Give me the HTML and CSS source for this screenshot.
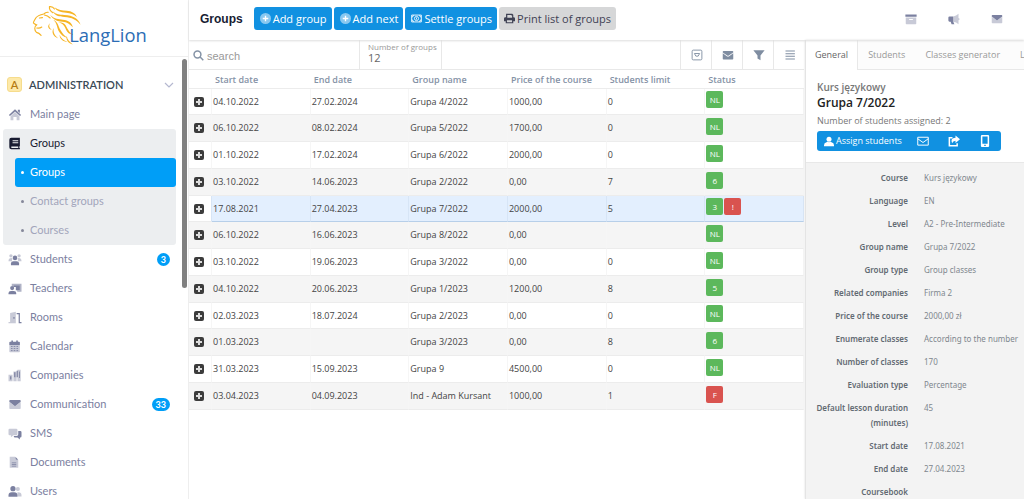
FILE: index.html
```html
<!DOCTYPE html>
<html lang="en">
<head>
<meta charset="utf-8">
<title>LangLion - Groups</title>
<link rel="stylesheet" href="styles.css">
</head>
<body>
<svg class="sprite" aria-hidden="true">
  <symbol id="i-mail" viewBox="0 0 16 16"><path class="soft" d="M1 5l7 5 7-5v7.500a1 1 0 0 1-1 1H2a1 1 0 0 1-1-1z"/><path d="M2 2.500h12a1 1 0 0 1 1 1v1.200L8 10 1 4.700V3.500a1 1 0 0 1 1-1z"/></symbol>
  <symbol id="i-mail-solid" viewBox="0 0 16 16"><path d="M1 5.800l5.500 4q1.500 1 3 0l5.500-4V13a1 1 0 0 1-1 1H2a1 1 0 0 1-1-1zM2 2.500h12a1 1 0 0 1 1 1v1L9 8.800q-1 .7-2 0L1 4.500v-1a1 1 0 0 1 1-1z"/></symbol>
  <symbol id="i-plus" viewBox="0 0 16 16"><circle class="soft-light" cx="8" cy="8" r="8"/><path d="M7 4h2v3h3v2H9v3H7V9H4V7h3z"/></symbol>
</svg>
<div class="app">
  <aside class="sidebar">
    <a class="logo" href="#" aria-label="LangLion">
      <svg viewBox="0 0 380 112">
        <g fill="none" stroke="#f6b526" stroke-width="3.500" stroke-linecap="round" stroke-linejoin="round">
          <path d="M144 33c-6-1-9 1-13 5-9 2-19 5-24 12-2 5-7 9-7 15 2 3 5 2 7 5M118 50l9-1"/>
          <path d="M110 70c-5 4-7 6-6 11 0 5 1 9 5 12 6 1 10 4 14 9M110 80c6 1 11 0 15-3"/>
          <path d="M133 41c7 1 12 4 17 9M148 16c-1 8 3 14 10 18M148 16c7-1 12 2 15 7"/>
        </g>
        <g fill="#f6b526">
          <path d="M163 18c12 8 22 10 36 10 16 1 27 8 31 19-9-9-19-12-32-13-17 0-29-5-35-16z"/>
          <path d="M157 30c12 10 21 10 35 11 27 1 43 11 49 29-12-14-26-22-48-23-17 0-28-4-36-17z"/>
          <path d="M150 41c14 12 25 13 38 14 17 2 27 9 30 23-9-10-17-16-31-17-16-1-28-6-37-20z"/>
          <path d="M174 63c23-1 23 13 30 22 4 8 9 12 15 14-10 1-17-4-21-13-5-11-8-19-24-23z"/>
          <path d="M160 56c15 6 14 20 21 30 6 11 13 18 22 24-13-3-22-11-28-22-5-11-4-22-15-32z"/>
          <path d="M150 66c-6 9-1 14 5 20-10-3-16-11-5-20zM161 80c-3 12 2 21 13 31-14-5-22-18-13-31zM178 100c5 11 13 17 24 22-14-2-23-9-24-22zM199 103c2 11 9 18 19 26-13-3-21-12-19-26z"/>
        </g>
        <text class="logo-text" x="207" y="122">LangLion</text>
      </svg>
    </a>
    <div class="side-scroll">
      <nav class="menu">
        <button class="section"><span class="letter">A</span><span>ADMINISTRATION</span>
          <svg class="chev" viewBox="0 0 10 6"><path d="M1 1l4 4 4-4"/></svg></button>
        <a class="item" href="#"><svg viewBox="0 0 16 16"><path class="soft" d="M8 5l5.500 5v5H10v-4H6v4H2.500v-5z"/><path d="M8 1.500l7.500 7-1.300 1.300L8 4.300 1.800 9.800.5 8.500zM11.500 2H14v4l-2.500-2z"/></svg>Main page</a>
        <div class="open">
          <a class="item dark" href="#"><svg viewBox="0 0 16 16"><path d="M3.500 1H14v10.500h-.6v2H14V15H3.500A2.500 2.500 0 0 1 1 12.500v-9A2.500 2.500 0 0 1 3.500 1z"/><path d="M5 4h7v1.200H5zM5 6.500h7v1.200H5zM3.500 11.800H12v1.700H3.500z" fill="#eceef0"/></svg>Groups</a>
          <a class="sub current" href="#">Groups</a>
          <a class="sub" href="#">Contact groups</a>
          <a class="sub" href="#">Courses</a>
        </div>
        <a class="item" href="#"><svg viewBox="0 0 16 16"><g class="soft"><circle cx="3" cy="3.500" r="2"/><circle cx="13" cy="3.500" r="2"/><path d="M0 10q0-4 3.500-4 1 0 1.500.5L4 10zM16 10q0-4-3.500-4-1 0-1.500.5l1 3.500z"/></g><circle cx="8" cy="6" r="2.800"/><path d="M3 15v-2q0-3 3-3h4q3 0 3 3v2z"/></svg>Students<span class="count">3</span></a>
        <a class="item" href="#"><svg viewBox="0 0 16 16"><path class="mid" d="M4 2h12v10h-5l-1-2h4V4H6v1H4z"/><path d="M6 4h8v6H9V6H6z"/><circle cx="4.500" cy="7.500" r="2.500"/><path d="M0 15v-1.500Q0 11 3 11h3.500q3 0 3 2.500V15z"/></svg>Teachers</a>
        <a class="item" href="#"><svg viewBox="0 0 16 16"><path class="soft" d="M2 2.500L9 1v14H0v-1.500h2z"/><path d="M10 2.500h4v11h2V15h-3.500V4H10zM6 7.500h1.500v2H6z"/></svg>Rooms</a>
        <a class="item" href="#"><svg viewBox="0 0 16 16"><path class="soft" d="M1 6h13v8a1 1 0 0 1-1 1H2a1 1 0 0 1-1-1z"/><path d="M3.500.5h2V2h4V.5h2V2H13a1 1 0 0 1 1 1v3H1V3a1 1 0 0 1 1-1h1.500z"/><path d="M3 8h9M3 10.500h9M3 13h9" stroke="#868aa8" stroke-width="1.200" stroke-dasharray="2 1.400"/></svg>Calendar</a>
        <a class="item" href="#"><svg viewBox="0 0 16 16"><path class="soft" d="M0 7h5v8H0zM6 3h4v12H6zM11 1h4v14h-4z"/><path d="M2 9h1.500v4H2zM7 4h1.500v6H7zM10 2h1.500v8H10zM13 3h1v8h-1z"/></svg>Companies</a>
        <a class="item" href="#"><svg><use href="#i-mail"/></svg>Communication<span class="count">33</span></a>
        <a class="item" href="#"><svg viewBox="0 0 16 16"><path class="soft" d="M1.500 2h8A1.500 1.500 0 0 1 11 3.500v5A1.500 1.500 0 0 1 9.500 10H6l-3 2.500V10H1.500A1.500 1.500 0 0 1 0 8.500v-5A1.500 1.500 0 0 1 1.500 2z"/><path d="M12 5h2.500A1.500 1.500 0 0 1 16 6.500v5a1.500 1.500 0 0 1-1.500 1.500H14v2.500L11 13H8a1.500 1.500 0 0 1-1.500-1.500V11H10q2 0 2-2z"/></svg>SMS</a>
        <a class="item" href="#"><svg viewBox="0 0 16 16"><path class="soft" d="M1.500 1H8v4h4v9.500H1.500z"/><path d="M8.500 1L12 4.500H8.500zM4 8h5.500v1H4zM4 10h5.500v1H4zM4 12h5.500v1H4z"/></svg>Documents</a>
        <a class="item" href="#"><svg viewBox="0 0 16 16"><g class="soft"><circle cx="11.500" cy="5" r="2.500"/><path d="M11 9h1q4 0 4 4v1h-5z"/></g><circle cx="5.500" cy="4.500" r="3.200"/><path d="M0 14.500V13q0-4 4-4h3q4 0 4 4v1.500z"/></svg>Users</a>
      </nav>
      <div class="thumb"></div>
    </div>
  </aside>

  <div class="content">
    <header class="topbar">
      <h1>Groups</h1>
      <button class="btn"><svg><use href="#i-plus"/></svg>Add group</button>
      <button class="btn"><svg><use href="#i-plus"/></svg>Add next</button>
      <button class="btn"><svg viewBox="0 0 16 16"><path d="M1 3h14v10H1zM1 6q2.500 0 2.500-3M15 6q-2.500 0-2.500-3M1 10q2.500 0 2.500 3M15 10q-2.500 0-2.500 3" fill="none" stroke="#fff" stroke-width="1.300"/><circle cx="8" cy="8" r="3" fill="none" stroke="#fff" stroke-width="1.200"/><path d="M7.400 6.500h1.200v3H7.400z"/></svg>Settle groups</button>
      <button class="btn grey"><svg viewBox="0 0 16 16"><path fill-rule="evenodd" d="M3 1h9l1.500 1.500V6H14a2 2 0 0 1 2 2v4h-2.500v3h-11v-3H0V8a2 2 0 0 1 2-2h1zM4.800 2.800V7h7V3.500h-1.200v-.7zM4.300 10.500v2.800h7.400v-2.800z"/></svg>Print list of groups</button>
      <div class="tools">
        <button aria-label="Archive"><svg viewBox="0 0 16 16"><path class="soft" d="M1 6h14v8a1 1 0 0 1-1 1H2a1 1 0 0 1-1-1z"/><path d="M.5 2h15v3H.5z"/><path d="M5.500 8h5v1.300h-5z" fill="#fff"/></svg></button>
        <button aria-label="Announcements"><svg viewBox="0 0 16 16"><path class="soft" d="M7 4.500q4-.5 7-3.500v5.500q1.500.5 1.500 1.500T14 9.500V15q-3-3-7-3.500z"/><path d="M2 4.500h5v7l1.500 3.500H4.800L3.500 11.500H2a1.500 1.500 0 0 1-1.500-1.500V6A1.500 1.500 0 0 1 2 4.500z"/></svg></button>
        <button aria-label="Messages"><svg><use href="#i-mail"/></svg></button>
      </div>
    </header>

    <div class="work">
      <main class="list">
        <div class="filters">
          <label class="search"><svg viewBox="0 0 16 16"><circle cx="6.500" cy="6.500" r="5" /><path d="M10.300 10.300L15 15"/></svg><input type="text" placeholder="search" aria-label="search"></label>
          <div class="total"><span>Number of groups</span><b>12</b></div>
          <div class="actions">
            <button aria-label="Show"><svg viewBox="0 0 16 16"><rect x="1.500" y="1.500" width="13" height="13" rx="1.500" fill="none" stroke="#8795a8" stroke-width="1.300"/><path d="M4.500 6h7l-2 3.500h-3z" fill="none" stroke="#8795a8" stroke-width="1.300"/></svg></button>
            <button aria-label="Send mail"><svg><use href="#i-mail-solid"/></svg></button>
            <button aria-label="Filter"><svg viewBox="0 0 16 16"><path d="M.5 1.500h15L10 8.500V15l-4-2.500v-4z"/></svg></button>
            <button aria-label="Menu"><svg viewBox="0 0 16 16"><path d="M2 2h12.500v1.400H2zM2 5.500h12.500v1.400H2zM2 9h12.500v1.400H2zM2 12.500h12.500v1.400H2z"/></svg></button>
          </div>
        </div>
        <table>
          <thead><tr><th class="exp"></th><th>Start date</th><th>End date</th><th>Group name</th><th>Price of the course</th><th>Students limit</th><th>Status</th></tr></thead>
          <tbody>
            <tr><td class="exp"><button aria-label="Expand"></button></td><td>04.10.2022</td><td>27.02.2024</td><td>Grupa 4/2022</td><td>1000,00</td><td>0</td><td class="st"><span class="tag">NL</span></td></tr>
            <tr><td class="exp"><button aria-label="Expand"></button></td><td>06.10.2022</td><td>08.02.2024</td><td>Grupa 5/2022</td><td>1700,00</td><td>0</td><td class="st"><span class="tag">NL</span></td></tr>
            <tr><td class="exp"><button aria-label="Expand"></button></td><td>01.10.2022</td><td>17.02.2024</td><td>Grupa 6/2022</td><td>2000,00</td><td>0</td><td class="st"><span class="tag">NL</span></td></tr>
            <tr><td class="exp"><button aria-label="Expand"></button></td><td>03.10.2022</td><td>14.06.2023</td><td>Grupa 2/2022</td><td>0,00</td><td>7</td><td class="st"><span class="tag">6</span></td></tr>
            <tr class="selected"><td class="exp"><button aria-label="Expand"></button></td><td>17.08.2021</td><td>27.04.2023</td><td>Grupa 7/2022</td><td>2000,00</td><td>5</td><td class="st"><span class="tag">3</span><span class="tag red">!</span></td></tr>
            <tr><td class="exp"><button aria-label="Expand"></button></td><td>06.10.2022</td><td>16.06.2023</td><td>Grupa 8/2022</td><td>0,00</td><td></td><td class="st"><span class="tag">NL</span></td></tr>
            <tr><td class="exp"><button aria-label="Expand"></button></td><td>03.10.2022</td><td>19.06.2023</td><td>Grupa 3/2022</td><td>0,00</td><td>0</td><td class="st"><span class="tag">NL</span></td></tr>
            <tr><td class="exp"><button aria-label="Expand"></button></td><td>04.10.2022</td><td>20.06.2023</td><td>Grupa 1/2023</td><td>1200,00</td><td>8</td><td class="st"><span class="tag">5</span></td></tr>
            <tr><td class="exp"><button aria-label="Expand"></button></td><td>02.03.2023</td><td>18.07.2024</td><td>Grupa 2/2023</td><td>0,00</td><td>0</td><td class="st"><span class="tag">NL</span></td></tr>
            <tr><td class="exp"><button aria-label="Expand"></button></td><td>01.03.2023</td><td></td><td>Grupa 3/2023</td><td>0,00</td><td>8</td><td class="st"><span class="tag">6</span></td></tr>
            <tr><td class="exp"><button aria-label="Expand"></button></td><td>31.03.2023</td><td>15.09.2023</td><td>Grupa 9</td><td>4500,00</td><td>0</td><td class="st"><span class="tag">NL</span></td></tr>
            <tr><td class="exp"><button aria-label="Expand"></button></td><td>03.04.2023</td><td>04.09.2023</td><td>Ind - Adam Kursant</td><td>1000,00</td><td>1</td><td class="st"><span class="tag red">F</span></td></tr>
          </tbody>
        </table>
      </main>

      <section class="panel">
        <div class="tabs"><button class="on">General</button><button>Students</button><button>Classes generator</button><button>Lessons</button></div>
        <div class="summary">
          <p class="kind">Kurs językowy</p>
          <h2>Grupa 7/2022</h2>
          <p class="num">Number of students assigned: 2</p>
          <div class="bar">
            <button class="assign"><svg viewBox="0 0 16 16"><circle cx="8" cy="4.500" r="4"/><path d="M0 15.500V14q0-4 4-5l1.500-.5q2.500 1.500 5 0L12 9q4 1 4 5v1.500z"/></svg>Assign students</button>
            <button aria-label="Mail"><svg viewBox="0 0 16 16"><path d="M1 3h14v10.500H1zM1 5l7 5 7-5" fill="none" stroke="#fff" stroke-width="1.300" stroke-linejoin="round"/></svg></button>
            <button aria-label="Share"><svg viewBox="0 0 16 16"><path d="M6 3.500H1.800v10.700h10.400V11" fill="none" stroke="#fff" stroke-width="2"/><path d="M10 .5l6 5-6 5V7.500q-3.500 0-4.500 3.500-3-7 4.500-7.500z"/></svg></button>
            <button aria-label="Phone"><svg viewBox="0 0 16 16"><path fill-rule="evenodd" d="M4 0h8a1.500 1.500 0 0 1 1.500 1.500v13A1.500 1.500 0 0 1 12 16H4a1.500 1.500 0 0 1-1.500-1.500v-13A1.500 1.500 0 0 1 4 0zM4.500 2v9.500h7V2zM7 13v1.500h2V13z"/></svg></button>
          </div>
        </div>
        <dl>
          <dt>Course</dt><dd>Kurs językowy</dd>
          <dt>Language</dt><dd>EN</dd>
          <dt>Level</dt><dd>A2 - Pre-Intermediate</dd>
          <dt>Group name</dt><dd>Grupa 7/2022</dd>
          <dt>Group type</dt><dd>Group classes</dd>
          <dt>Related companies</dt><dd>Firma 2</dd>
          <dt>Price of the course</dt><dd>2000,00 zł</dd>
          <dt>Enumerate classes</dt><dd>According to the number</dd>
          <dt>Number of classes</dt><dd>170</dd>
          <dt>Evaluation type</dt><dd>Percentage</dd>
          <dt>Default lesson duration (minutes)</dt><dd>45</dd>
          <dt>Start date</dt><dd>17.08.2021</dd>
          <dt>End date</dt><dd>27.04.2023</dd>
          <dt>Coursebook</dt><dd></dd>
        </dl>
      </section>
    </div>
  </div>
</div>
</body>
</html>
```
FILE: styles.css
```css
* { box-sizing: border-box; }
body { margin: 0; font: 9px/14px "Open Sans", "Noto Sans", sans-serif; color: #555; background: #fff; }
button { font: inherit; color: inherit; background: none; border: 0; padding: 0; cursor: pointer; }
a { color: inherit; text-decoration: none; }
h1, h2, p, dl, dd { margin: 0; }
svg { fill: currentColor; flex: none; }
.sprite { display: none; }
.soft { opacity: .42; }
.mid { opacity: .6; }
.soft-light { opacity: .5; }

.app { display: flex; height: 100vh; overflow: hidden; }

/* Sidebar */
.sidebar { width: 189px; flex: none; display: flex; flex-direction: column; border-right: 1px solid #eee; font-family: Lato, sans-serif; }
.logo { height: 57px; flex: none; border-bottom: 1px solid #eee; }
.logo svg { display: block; width: 127px; height: 40px; overflow: visible; }
.logo-text { font: 55px "Open Sans", sans-serif; fill: #2c6db5; }
.side-scroll { display: flex; justify-content: space-between; padding-right: 1px; }
.menu { width: 176px; padding: 14px 0 0 3px; font-size: 11px; color: #7b80a0; }
.section, .item, .sub { display: flex; align-items: center; height: 29px; width: 100%; padding-bottom: 1px; }
.section { padding: 0 2px 2px 4px; gap: 7px; font-size: 11px; font-weight: 600; color: #3a4a55; }
.letter { width: 15px; height: 15px; line-height: 13px; text-align: center; border: 1px solid #f6dc8c; border-radius: 3px; background: #fde9a9; color: #b57a10; }
.chev { width: 10px; height: 6px; margin-left: auto; fill: none; stroke: #b5b8d0; stroke-width: 1.2; }
.item { padding: 0 6px 1px 5px; gap: 8px; }
.item svg { width: 14px; height: 13px; }
.dark { color: #181b30; }
.open { background: #eceef0; border-radius: 3px; }
.sub { width: auto; margin-left: 12px; padding-left: 6px; gap: 6px; color: #a2a5bb; }
.sub::before { content: ""; width: 3px; height: 3px; border-radius: 50%; background: #85889a; }
.current { background: #009ef7; color: #fff; border-radius: 3px; }
.current::before { background: #fff; }
.count { margin-left: auto; min-width: 13px; height: 13px; padding: 0 4px; border-radius: 7px; background: #009ef7; color: #fff; font-size: 9px; font-weight: 700; line-height: 13px; text-align: center; }
.thumb { width: 5px; height: 229px; margin-top: 2px; border-radius: 3px; background: #808080; }

/* Top bar */
.content { flex: 1; min-width: 0; display: flex; flex-direction: column; }
.topbar { display: flex; align-items: center; gap: 2px; height: 40px; flex: none; padding: 0 21px 3px 11px; box-shadow: 0 1px 2px #ddd; z-index: 1; }
h1 { margin-right: 9px; font: bold 12px/16px "Liberation Sans", Arial, sans-serif; color: #181c32; }
.btn { display: flex; align-items: center; gap: 2px; height: 23px; padding: 0 5px 0 6px; border-radius: 3px; background: #1191e1; color: #fff; font-size: 11px; }
.btn svg { width: 11px; height: 11px; }
.grey { background: #d6d7d8; color: #3f4254; padding: 0 5px; }
.tools { display: flex; gap: 31px; margin-left: auto; color: #7b80a0; }
.tools svg { display: block; width: 12px; height: 12px; }

/* Group list */
.work { flex: 1; min-height: 0; display: flex; }
.list { flex: 1; min-width: 0; padding-right: 1px; }
.filters { display: flex; height: 30px; border-bottom: 1px solid #e8e8e8; color: #7f8da1; }
.search { display: flex; align-items: center; gap: 3px; width: 171px; padding: 2px 0 0 4px; border-right: 1px solid #e8e8e8; }
.search svg { width: 11px; height: 11px; fill: none; stroke: #8593a6; stroke-width: 2.2; }
.search input { width: 100%; min-width: 0; padding: 0; border: 0; outline: 0; background: none; font: 11px/14px "Liberation Sans", Arial, sans-serif; }
.search input::placeholder { color: #999; opacity: 1; }
.total { width: 82px; padding: 2px 0 0 8px; border-right: 1px solid #e8e8e8; }
.total span { display: block; font-size: 8px; line-height: 10px; color: #999; white-space: nowrap; }
.total b { display: block; font-size: 11px; line-height: 12px; font-weight: 400; color: #666; }
.actions { display: flex; margin-left: auto; }
.actions button { width: 31px; padding-left: 2px; border-left: 1px solid #e8e8e8; }
.actions svg { display: block; width: 12px; height: 12px; margin: 0 auto; }
table { width: 100%; table-layout: fixed; border-collapse: separate; border-spacing: 0; }
th, td { padding: 0 0 0 1px; text-align: left; white-space: nowrap; border-bottom: 1px solid #ececec; }
th { height: 19px; padding: 2px 0 0 3px; font-weight: 600; color: #8592a6; }
td { height: 27px; color: #444; border-right: 1px solid #f6f6f6; }
tr:nth-child(4n+1) td { height: 26px; }
tbody tr:nth-child(even) { background: #f5f5f5; }
.selected td { background: #e3effe; border-bottom-color: #b7cfe9; border-right-color: #d7e5f6; }
.selected .exp { background: #fff; border-bottom-color: #ececec; }
.exp { width: 23px; padding: 0 0 0 5px; }
.exp button { display: block; position: relative; width: 10px; height: 10px; border-radius: 2px; background: #3c3c3c; }
.exp button::before, .exp button::after { content: ""; position: absolute; background: #ddd; }
.exp button::before { left: 2px; right: 2px; top: 4px; height: 2px; }
.exp button::after { top: 2px; bottom: 2px; left: 4px; width: 2px; }
.st { padding: 0 0 4px 1px; vertical-align: middle; }
.tag { display: inline-block; vertical-align: middle; width: 17px; height: 17px; margin-right: 1px; border-radius: 2px; background: #5cb85c; color: #fff; font-size: 8px; line-height: 17px; text-align: center; }
.red { background: #d9534f; }

/* Details panel */
.panel { width: 219px; flex: none; display: flex; flex-direction: column; overflow: hidden; border-left: 1px solid #e4e4e4; box-shadow: 0 0 2px #ddd; }
.tabs { display: flex; flex: none; height: 30px; border-bottom: 1px solid #e8e8e8; background: #fcfcfc; color: #999; }
.tabs button { flex: none; padding: 0 10px; }
.tabs .on { height: 30px; padding: 0 9px; border-right: 1px solid #e8e8e8; background: #fff; color: #666; }
.summary { flex: none; padding: 9px 11px 11px; border-bottom: 1px solid #e8e8e8; background: #fff; }
.kind { font-size: 10px; line-height: 16px; font-weight: 600; color: #777; }
h2 { font-size: 12px; line-height: 16px; font-weight: 600; color: #222; }
.num { line-height: 14px; margin: 3px 0; color: #777; }
.bar { display: inline-flex; height: 20px; border-radius: 3px; background: #1191e1; color: #fff; vertical-align: top; }
.bar button { width: 31px; }
.bar svg { display: block; width: 12px; height: 12px; margin: 0 auto; }
.bar .assign { display: flex; align-items: center; gap: 2px; width: auto; padding: 0 6px 0 7px; }
.bar .assign svg { width: 10px; height: 11px; margin: 0; }
dl { flex: 1; display: grid; grid-template-columns: 102px 1fr; align-content: start; gap: 8px 16px; padding-top: 7px; background: #f3f3f3; font: 8px/15px "Noto Sans", "Open Sans", sans-serif; white-space: nowrap; }
dt { text-align: right; font-weight: 600; color: #626a72; white-space: normal; }
dd { color: #80878e; }
```
